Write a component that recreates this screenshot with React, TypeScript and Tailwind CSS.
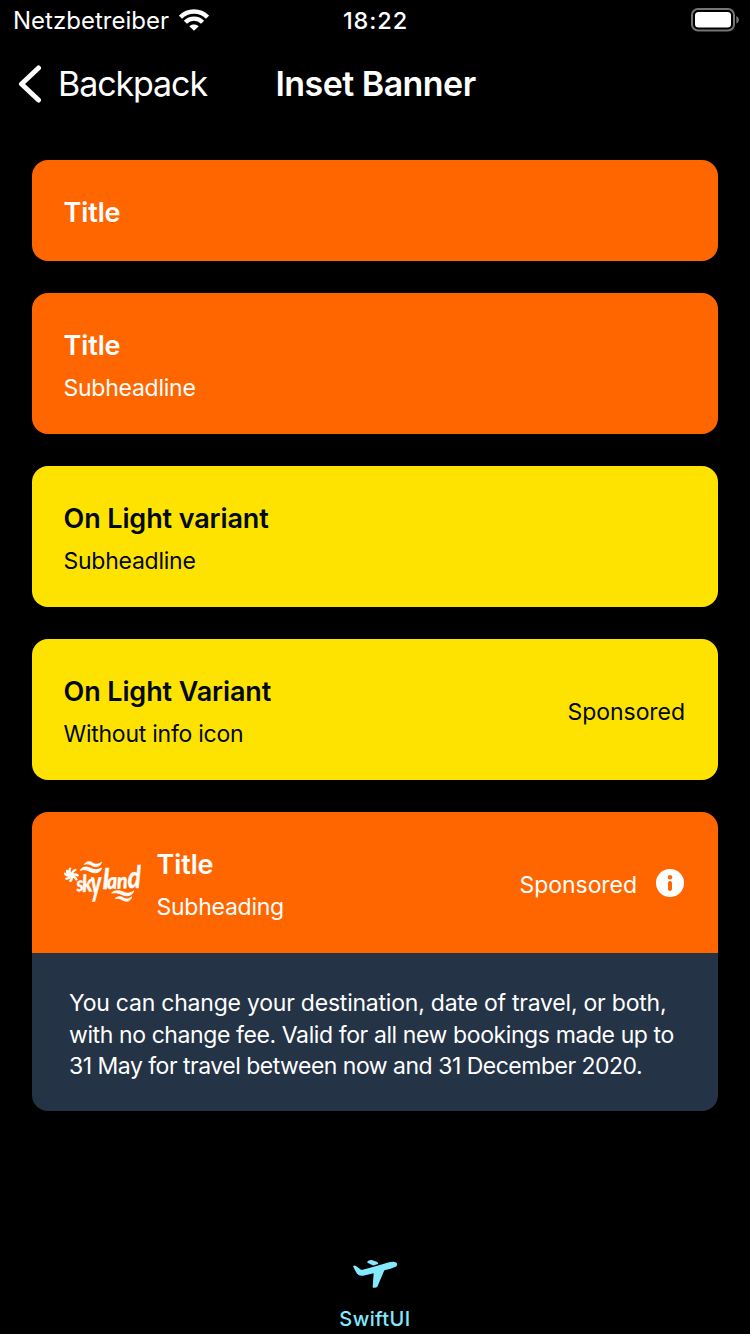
import React from "react";

function StatusBar() {
  return (
    <div className="grid h-10 grid-cols-3 items-center pr-[10px] pl-[13px]">
      <div className="flex items-center gap-[10px]">
        <span className="pt-[2px] text-[24px] leading-[38px] tracking-[0.02px]">Netzbetreiber</span>
        <svg width="30" height="22" viewBox="0 0 30 22" fill="none" stroke="white" strokeWidth="4.4">
          <path d="M1.5 8.2C9 .6 21 .6 28.5 8.2" />
          <path d="M6.4 13.2C11 8.4 19 8.4 23.6 13.2" />
          <path d="M10.3 17.2C13 14.8 17 14.8 19.7 17.2L15 21.8Z" fill="white" stroke="none" />
        </svg>
      </div>
      <span className="pt-[2px] pr-[2px] text-center text-[23.5px] leading-[38px] font-medium tracking-[0.9px]">18:22</span>
      <svg className="justify-self-end" width="49" height="24" viewBox="0 0 49 24">
        <rect x="1" y="1" width="42" height="21.5" rx="6" fill="none" stroke="#747474" strokeWidth="2" />
        <rect x="4" y="4" width="36" height="15.5" rx="3.5" fill="white" />
        <path d="M45.3 8c3.4 1.4 3.4 6.200 0 7.600z" fill="#747474" />
      </svg>
    </div>
  );
}

function NavBar() {
  return (
    <div className="flex h-[88px] items-center pl-[18px]">
      <svg width="26" height="40" viewBox="0 0 26 40" fill="none" stroke="white" strokeWidth="5" strokeLinecap="round" strokeLinejoin="round">
        <path d="M20.500 4L3.500 20l17 16" />
      </svg>
      <span className="ml-[14px] w-[217.5px] text-[34px] leading-[40px] tracking-[-1.1px]">Backpack</span>
      <span className="text-[34px] leading-[40px] font-semibold tracking-[-0.55px]">Inset Banner</span>
    </div>
  );
}

function SkylandLogo() {
  return (
    <svg width="93" height="54" viewBox="27 38 279 162" className="shrink-0" fill="white">
      <g stroke="white" strokeWidth="7" strokeLinecap="round" fill="none">
        <path d="M47 88q-6-9-2-18M50 88q2-11 11-14M52 90q9-5 16 0M52 93q9 1 12 9M49 94q3 8-3 13M46 93q-4 8-12 7M44 90q-8 2-14-5M45 88q-8-3-9-11" />
      </g>
      <circle cx="48" cy="90" r="9" />
      <g stroke="white" strokeWidth="3" strokeLinejoin="round">
        <path d="M88 57c8-10 17-10 25-4s16 5 27-2c-6 13-17 16-28 10-9-6-15-7-24-4z" />
        <path d="M76 75c8-13 22-11 33-5 11 5 20 4 31-2-5 14-19 18-33 11-12-6-21-8-31-4z" />
        <path d="M170 143c10-9 23-8 34-3 13 6 22 4 32-3-4 13-19 18-34 11-13-6-21-7-32-5z" />
        <path d="M181 159c9-7 17-6 25-1 9 5 15 3 24-3-3 12-15 16-27 9-8-5-14-6-22-5z" />
      </g>
      <g className="font-['Lato'] font-bold italic" stroke="white" strokeWidth="1.5">
        <text transform="translate(66 138) rotate(-5) scale(.85 1)" fontSize="60">s</text>
        <text transform="translate(83 140) rotate(-4) scale(.85 1)" fontSize="70">k</text>
        <text transform="translate(109 151) rotate(-2) scale(.8 1.35)" fontSize="78">y</text>
        <text transform="translate(143 131) scale(.95 1)" fontSize="84">l</text>
        <text transform="translate(157 131) rotate(-3) scale(.9 1)" fontSize="66">a</text>
        <text transform="translate(187 130) rotate(-3) scale(.9 1)" fontSize="66">n</text>
        <text transform="translate(218 129) scale(.77 1)" fontSize="94">d</text>
      </g>
    </svg>
  );
}

function InfoIcon() {
  return (
    <svg width="28" height="28" viewBox="0 0 28 28">
      <circle cx="14" cy="14" r="14" fill="white" />
      <circle cx="14" cy="8.200" r="2.200" fill="#ff6600" />
      <rect x="12" y="12" width="4" height="10" rx="2" fill="#ff6600" />
    </svg>
  );
}

type BannerProps = {
  title: string;
  subheadline?: string;
  tone: string;
  logo?: React.ReactNode;
  callToAction?: React.ReactNode;
};

function Banner({ title, subheadline, tone, logo, callToAction }: BannerProps) {
  return (
    <div className={`flex items-center pt-[34px] pr-[33px] pb-[30px] pl-8 ${tone}`}>
      {logo}
      <div className="flex grow flex-col gap-2">
        <span className="-ml-[0.5px] text-[27px] leading-[37px] font-semibold tracking-[-0.11px]">{title}</span>
        {subheadline && <span className="-ml-[0.5px] text-[23px] leading-[32px] tracking-[-0.25px]">{subheadline}</span>}
      </div>
      {callToAction}
    </div>
  );
}

const orange = "bg-[#ff6600] text-white";
const yellow = "bg-[#ffe300] text-[#010913]";

export default function App() {
  return (
    <div className="flex h-[1334px] w-[750px] flex-col bg-black font-['Inter','Liberation_Sans',sans-serif] text-white">
      <StatusBar />
      <NavBar />
      <main className="flex flex-col gap-8 px-8 pt-8">
        <div className="overflow-hidden rounded-[16px]">
          <Banner tone={orange} title="Title" />
        </div>
        <div className="overflow-hidden rounded-[16px]">
          <Banner tone={orange} title="Title" subheadline="Subheadline" />
        </div>
        <div className="overflow-hidden rounded-[16px]">
          <Banner tone={yellow} title="On Light variant" subheadline="Subheadline" />
        </div>
        <div className="overflow-hidden rounded-[16px]">
          <Banner
            tone={yellow}
            title="On Light Variant"
            subheadline="Without info icon"
            callToAction={<span className="text-[23px] leading-[32px] tracking-[-0.05px]">Sponsored</span>}
          />
        </div>
        <div className="overflow-hidden rounded-[16px]">
          <Banner
            tone={orange}
            title="Title"
            subheadline="Subheading"
            logo={<SkylandLogo />}
            callToAction={
              <div className="mr-[1px] flex items-center gap-[19px]">
                <span className="text-[23px] leading-[32px] tracking-[-0.05px]">Sponsored</span>
                <div className="pb-1">
                  <InfoIcon />
                </div>
              </div>
            }
          />
          <p className="h-[158px] bg-[#243346] pt-[35px] pl-[37px] text-[23px] leading-[31.5px] whitespace-nowrap">
            <span className="block tracking-[-0.22px]">You can change your destination, date of travel, or both,</span>
            <span className="block tracking-[-0.4px]">with no change fee. Valid for all new bookings made up to</span>
            <span className="block tracking-[-0.5px]">31 May for travel between now and 31 December 2020.</span>
          </p>
        </div>
      </main>
      <footer className="mt-auto flex flex-col items-center text-[#84e9ff]">
        <svg width="46" height="30" viewBox="81 42 138 90" fill="currentColor">
          <path d="M84 63q5-3 10 1l14 10q2 1 5 0l44-12 35-10q16-5 23 2 4 7-3 11-14 6-34 11l-20 47q-2 5-8 5h-5q-2 0-2-3l3-40-32 7q-11 2-18-6-7-11-12-23z" />
          <path d="M127 50q4-6 13-5l15 5q8 4 2 8l-10 3q-4 1-7-2l-11-5q-4-1-2-4z" />
        </svg>
        <span className="mt-[15px] text-[20px] leading-[30px] font-medium tracking-[0.4px]">SwiftUI</span>
      </footer>
    </div>
  );
}
